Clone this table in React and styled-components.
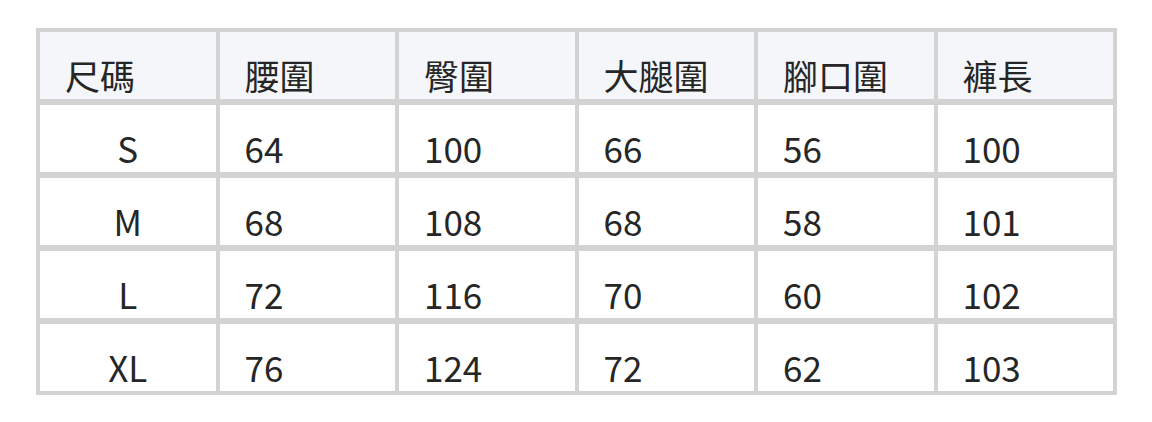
import React from "react";
import styled, { createGlobalStyle } from "styled-components";

const GlobalStyle = createGlobalStyle`
  html, body {
    margin: 0;
    padding: 0;
    background-color: #ffffff;
  }
  body {
    font-family: "Noto Sans CJK TC", "Noto Sans", sans-serif;
    color: #262626;
  }
`;

const Page = styled.div`
  width: 1152px;
  height: 422px;
  padding: 28px 0 0 36px;
  box-sizing: border-box;
`;

const SizeTable = styled.div`
  width: 1081px;
  display: grid;
  grid-template-columns: repeat(6, 1fr);
  grid-auto-rows: 67px;
  column-gap: 4px;
  row-gap: 6px;
  padding: 4px;
  box-sizing: border-box;
  background-color: #d3d3d3;
`;

const Cell = styled.div`
  display: flex;
  align-items: flex-end;
  justify-content: ${(p) => (p.$center ? "center" : "flex-start")};
  padding: 0 25px 7px;
  background-color: ${(p) => (p.$head ? "#f5f6fa" : "#ffffff")};
  font-size: 35px;
  line-height: 35px;
  color: #262626;
`;

const headers = ["尺碼", "腰圍", "臀圍", "大腿圍", "腳口圍", "褲長"];

const rows = [
  ["S", 64, 100, 66, 56, 100],
  ["M", 68, 108, 68, 58, 101],
  ["L", 72, 116, 70, 60, 102],
  ["XL", 76, 124, 72, 62, 103],
];

const App = () => {
  return (
    <>
      <GlobalStyle />
      <Page>
        <SizeTable>
          {headers.map((h) => (
            <Cell key={h} $head>
              {h}
            </Cell>
          ))}
          {rows.map((row) =>
            row.map((value, i) => (
              <Cell key={`${row[0]}-${i}`} $center={i === 0}>
                {value}
              </Cell>
            ))
          )}
        </SizeTable>
      </Page>
    </>
  );
};

export default App;
